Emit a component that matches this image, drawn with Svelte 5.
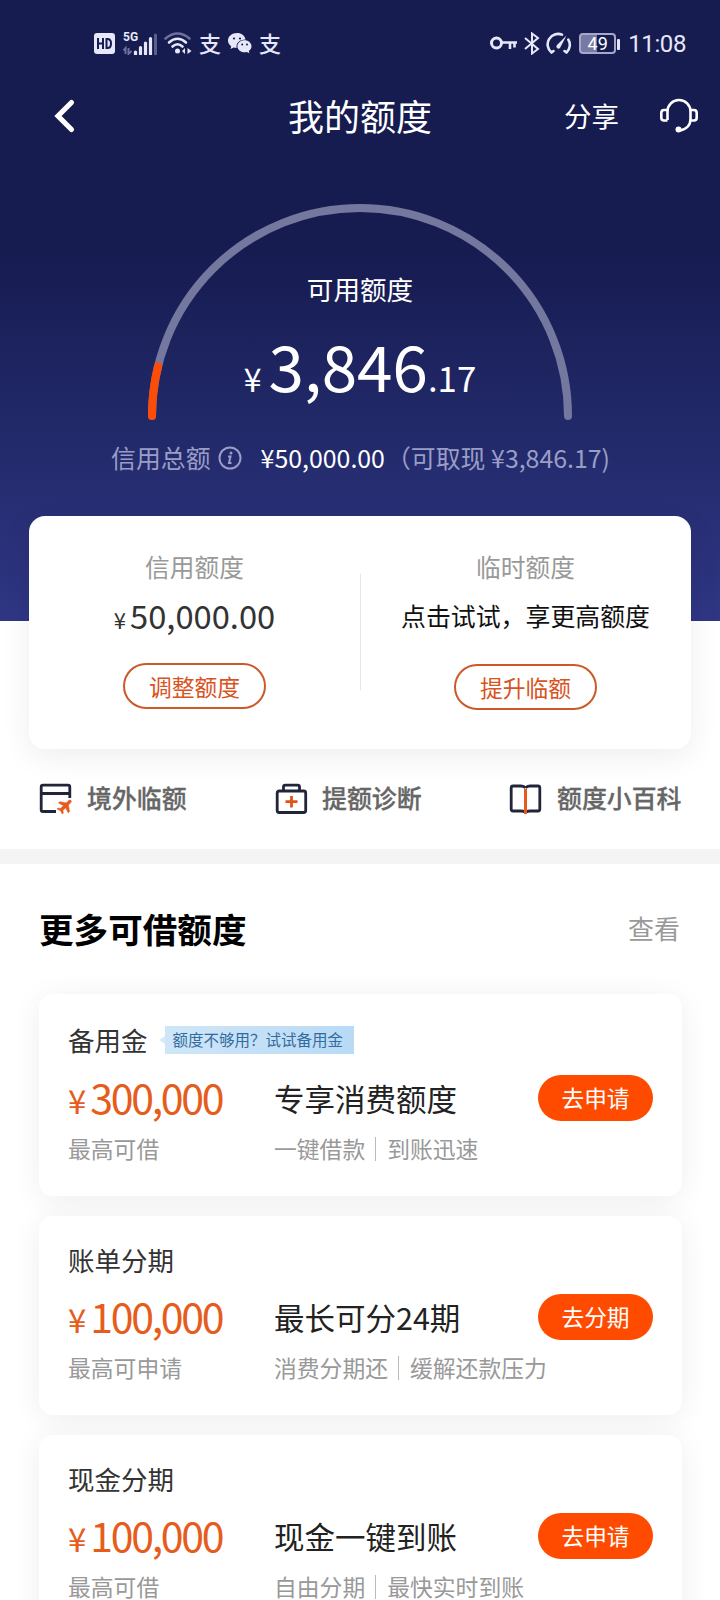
<script>
  const R = 208;
  const ratio = 3846.17 / 50000;
  const angle = Math.PI * ratio;
  const endX = 212 - R * Math.cos(angle);
  const endY = 212 - R * Math.sin(angle);

  const loans = [
    { title: '备用金', tag: '额度不够用？试试备用金', amount: '300,000', note: '最高可借', main: '专享消费额度', sub: ['一键借款', '到账迅速'], action: '去申请' },
    { title: '账单分期', amount: '100,000', note: '最高可申请', main: '最长可分24期', sub: ['消费分期还', '缓解还款压力'], action: '去分期' },
    { title: '现金分期', amount: '100,000', note: '最高可借', main: '现金一键到账', sub: ['自由分期', '最快实时到账'], action: '去申请' }
  ];
</script>

<main class="page">
  <header class="hero">
    <div class="status">
      <svg class="hd" width="21" height="21" viewBox="0 0 21 21">
        <rect width="21" height="21" rx="3" fill="#e6e8fa" />
        <path d="M4 5v11M9 5v11M4 10.500h5M12.500 6v9h1q3.500 0 3.500-4.500t-3.500-4.500z" fill="none" stroke="#161b50" stroke-width="2" />
      </svg>
      <div class="net">
        <span>5G</span>
        <svg width="36" height="23" viewBox="0 0 36 23">
          <path d="M3.500 22v-6l-2 2.500M6.500 16v6l3-3" fill="none" stroke="#6b70a0" stroke-width="2" />
          <path d="M13.500 22v-2M18.500 22v-6.500M23.500 22v-11M28.500 22v-15.500" stroke="#e6e8fa" stroke-width="3.200" stroke-linecap="round" />
          <path d="M33.500 22v-19" stroke="#5a5f8f" stroke-width="3" stroke-linecap="round" />
        </svg>
      </div>
      <svg class="wifi" width="28" height="23" viewBox="0 0 28 23">
        <g fill="none" stroke-width="2.600" stroke-linecap="round">
          <path d="M1.500 6.500Q13.500-3.500 25.500 6.500" stroke="#6b70a0" />
          <path d="M5 10.500Q13.500 3 22 10.500M8.500 14.500Q13.500 10 18.500 14.500" stroke="#e6e8fa" />
        </g>
        <circle cx="13.500" cy="19" r="2.500" fill="#e6e8fa" />
        <path d="M21 16v6l-3-3zM23.500 16l4 3-4 3z" fill="#e6e8fa" />
      </svg>
      <span class="zhi">支</span>
      <svg class="wechat" width="24" height="21" viewBox="0 0 24 21">
        <path d="M9 0C4 0 0 3.300 0 7.500c0 2.300 1.200 4.300 3.200 5.700L2.500 16l3.200-1.600c1 .3 2 .5 3 .5-1-5 3-8.500 8.800-8.500C16.800 2.700 13.500 0 9 0z" fill="#e6e8fa" />
        <path d="M16.500 7.300c-4 0-7.100 2.700-7.100 6s3.100 6 7.100 6c.8 0 1.600-.1 2.400-.4l2.500 1.400-.6-2.300c1.600-1.100 2.700-2.800 2.700-4.700 0-3.300-3-6-7-6z" fill="#e6e8fa" />
        <circle cx="6" cy="5.500" r="1.100" fill="#161b50" /><circle cx="12" cy="5.500" r="1.100" fill="#161b50" />
        <circle cx="14.200" cy="11.600" r="1" fill="#161b50" /><circle cx="19" cy="11.600" r="1" fill="#161b50" />
      </svg>
      <span class="zhi second">支</span>
      <div class="right">
        <svg class="key" width="27" height="14" viewBox="0 0 27 14" fill="none" stroke="#e6e8fa" stroke-width="3">
          <circle cx="6.500" cy="7" r="5" /><path d="M12 6.500h15M20 7v6M24.500 7v4.500" stroke-width="2.600" />
        </svg>
        <svg class="bt" width="16" height="23" viewBox="0 0 16 23" fill="none" stroke="#e6e8fa" stroke-width="2">
          <path d="M1 6l13 11-6 4.500V1.500L14 6 1 17" />
        </svg>
        <svg class="speed" width="26" height="23" viewBox="0 0 26 23" fill="none" stroke="#e6e8fa" stroke-width="2.600" stroke-linecap="round">
          <path d="M5.500 20.500A10.500 10.500 0 0 1 16 2.600M22.300 7.500A10.500 10.500 0 0 1 20.500 20.500M5.500 20.500l2-1.500M20.500 20.500l-2-1.500" />
          <path d="M20.500 3.500L11 13a2 2 0 1 0 3 3z" fill="#e6e8fa" stroke="none" />
        </svg>
        <div class="battery">49</div>
        <span class="nub"></span>
        <span class="time">11:08</span>
      </div>
    </div>

    <nav class="bar">
      <svg class="back" width="24" height="36" viewBox="0 0 24 36" fill="none" stroke="#fff" stroke-width="5.200" stroke-linecap="round" stroke-linejoin="miter">
        <path d="M19.500 4.500L6 18l13.500 13.500" />
      </svg>
      <h1>我的额度</h1>
      <span class="share">分享</span>
      <svg class="headset" width="38" height="35" viewBox="0 0 38 35" fill="none" stroke="#fff" stroke-width="2.600">
        <path d="M7.500 22V13.500a11.500 11.500 0 0 1 23 0v7.500c0 6-4 10.500-11 11.500" />
        <path d="M7.500 12H4q-2.700 0-2.700 3v4.500q0 3 2.700 3h3.500M30.500 12H34q2.700 0 2.700 3v4.500q0 3-2.700 3h-3.500" />
        <circle cx="18.500" cy="31.500" r="3" fill="#fff" stroke="none" />
      </svg>
    </nav>

    <section class="gauge">
      <svg width="424" height="216" viewBox="0 0 424 216" fill="none" stroke-width="8" stroke-linecap="round">
        <path d="M4 212A208 208 0 0 1 420 212" stroke="#74789f" />
        <path d={`M4 212A208 208 0 0 1 ${endX} ${endY}`} stroke="#fc4c08" />
      </svg>
      <div class="reading">
        <p>可用额度</p>
        <div class="big"><span class="yen">¥</span><b>3,846</b><span class="cents">.17</span></div>
      </div>
    </section>

    <div class="total">
      <span>信用总额</span>
      <svg width="24" height="24" viewBox="0 0 24 24" fill="none" stroke="#9a9ec6">
        <circle cx="12" cy="12" r="10.500" stroke-width="2" />
        <path d="M10 10.500h2.500l-1.500 6.500h2.500" stroke-width="2" /><circle cx="13" cy="7" r="1.500" fill="#9a9ec6" stroke="none" />
      </svg>
      <strong>¥50,000.00</strong>
      <span class="cash">（可取现 ¥3,846.17)</span>
    </div>
  </header>

  <section class="limits">
    <div class="col">
      <p class="label">信用额度</p>
      <p class="sum"><small>¥</small>50,000.00</p>
      <button>调整额度</button>
    </div>
    <div class="col second">
      <p class="label">临时额度</p>
      <p class="try">点击试试，享更高额度</p>
      <button>提升临额</button>
    </div>
  </section>

  <section class="links">
    <div class="link">
      <svg width="34" height="32" viewBox="0 0 34 32" fill="none" stroke="#20253a" stroke-width="2.800">
        <path d="M17 28.500H4q-1.800 0-1.800-1.800V4q0-1.800 1.800-1.800h25q1.800 0 1.800 1.800v11M2 10.500h29" />
        <path d="M32 17.500c-1-.8-2-.3-3 .7l-1.800 1.700-6.400-1.200-1.300 1.300 5 2.600-2.800 2.800-2.500-.4-1 1 3.400 1.700 1.700 3.400 1-1-.4-2.500 2.800-2.800 2.500 5 1.300-1.300-1.100-6.400 1.700-1.800c1-1 1.600-2 .9-2.800z" fill="#e65a1c" stroke="#e65a1c" stroke-width=".6" />
      </svg>
      <span>境外临额</span>
    </div>
    <div class="link two">
      <svg width="34" height="32" viewBox="0 0 34 32" fill="none" stroke="#20253a" stroke-width="2.800">
        <rect x="2.200" y="8" width="28.500" height="21.500" rx="2" /><path d="M8.500 8V4q0-1.800 1.800-1.800h12.400q1.800 0 1.800 1.800v4" />
        <path d="M16.500 13v11.500M10.500 18.700h12" stroke="#e0531c" />
      </svg>
      <span>提额诊断</span>
    </div>
    <div class="link three">
      <svg width="34" height="32" viewBox="0 0 34 32" fill="none" stroke="#20253a" stroke-width="2.800">
        <path d="M16.500 5Q15 3 12 3H4Q2.200 3 2.200 5v21q0 2 1.800 2h8q3.500 0 4.500 1.500M16.500 5Q18 3 21 3h8q1.800 0 1.800 2v21q0 2-1.800 2h-8q-3.500 0-4.500 1.500" />
        <path d="M16.500 6v25" stroke="#e65a1c" stroke-width="3" />
      </svg>
      <span>额度小百科</span>
    </div>
  </section>

  <section class="more">
    <div class="head"><h2>更多可借额度</h2><a>查看</a></div>
    {#each loans as loan}
      <article class:tagged={loan.tag}>
        <div class="title">
          <span>{loan.title}</span>
          {#if loan.tag}<em>{loan.tag}</em>{/if}
        </div>
        <div class="row">
          <div class="left">
            <p class="price"><span>¥</span>{loan.amount}</p>
            <p class="note">{loan.note}</p>
          </div>
          <div class="mid">
            <p class="main">{loan.main}</p>
            <p class="sub"><span>{loan.sub[0]}</span><i></i><span>{loan.sub[1]}</span></p>
          </div>
          <button>{loan.action}</button>
        </div>
      </article>
    {/each}
  </section>
</main>

<style>
  :global(body) { margin: 0; background: #fff; }
  .page { width: 720px; height: 1600px; overflow: hidden; background: #fff; font-family: "Noto Sans CJK SC", sans-serif; color: #222; }
  p, h1, h2 { margin: 0; font-weight: 400; white-space: nowrap; }
  svg { display: block; flex: none; }
  button { font-family: inherit; padding: 0; box-sizing: border-box; white-space: nowrap; }
  .hero { height: 621px; background: linear-gradient(#161b50 0, #161b50 250px, #202765 400px, #2f3684 621px); color: #fff; }

  .status { height: 88px; display: flex; align-items: center; padding: 0 34px 0 94px; box-sizing: border-box; color: #e6e8fa; }
  .hd { margin-top: -1px; }
  .net { position: relative; margin: -2px 0 0 7px; }
  .net span { position: absolute; left: 1px; top: -1px; font: 700 12px/12px Roboto, sans-serif; }
  .wifi { margin: -1px 0 0 6px; }
  .zhi { font-size: 22px; line-height: 22px; font-weight: 500; margin: -4px 0 0 7px; }
  .wechat { margin: -1px 0 0 7px; }
  .zhi.second { margin-left: 7px; }
  .right { margin-left: auto; display: flex; align-items: center; }
  .key { margin-top: -2px; }
  .bt { margin: -2px 0 0 7px; }
  .speed { margin: -2px 0 0 6px; }
  .battery { width: 37px; height: 21px; box-sizing: border-box; border: 2px solid #a5a8c9; border-radius: 4px; margin: -1px 0 0 7px; background: linear-gradient(90deg, #777aa2 48%, transparent 48%); font: 400 18px/17px Roboto, sans-serif; text-align: center; color: #fff; }
  .nub { width: 3px; height: 11px; background: #e6e8fa; border-radius: 1px; margin-left: 1px; }
  .time { font: 400 24px/28px Roboto, sans-serif; margin-left: 8px; letter-spacing: -.4px; }

  .bar { height: 60px; display: grid; grid-template-columns: 288px 144px 132px 96px 1fr; align-items: center; }
  .back { margin-left: 52px; margin-top: -5px; }
  .bar h1 { font-size: 36px; line-height: 56px; margin-top: -6px; }
  .share { font-size: 27.500px; line-height: 40px; grid-column: 4; margin-top: -6px; }
  .headset { margin-top: -5px; }

  .gauge { width: 424px; height: 216px; margin: 56px auto 0; display: grid; }
  .gauge > * { grid-area: 1 / 1; }
  .reading { padding-top: 67px; text-align: center; }
  .reading p { font-size: 26.600px; line-height: 36px; }
  .big { display: flex; align-items: baseline; justify-content: center; line-height: 80px; margin-top: 17px; }
  .big b { font-weight: 400; font-size: 63.800px; }
  .yen { font-size: 32px; margin-right: 7px; }
  .cents { font-size: 34.800px; }

  .total { display: flex; align-items: center; height: 40px; margin: 18px 0 0 111px; font-size: 24.900px; line-height: 40px; color: #9a9ec6; white-space: nowrap; }
  .total span, .total strong { margin-top: -2px; }
  .total svg { margin-left: 7px; }
  .total strong { font-weight: 400; color: #fff; margin-left: 19px; }
  .total .cash { margin-left: 1px; }

  .limits { position: relative; width: 662px; height: 233px; box-sizing: border-box; margin: -105px auto 0; background: #fff; border-radius: 16px; box-shadow: 0 8px 30px rgba(0, 0, 0, .07); display: grid; grid-template-columns: 1fr 1fr; }
  .col { text-align: center; padding-top: 32px; }
  .col.second { background: linear-gradient(#e6e6e6, #e6e6e6) 0 58px / 1px 116px no-repeat; }
  .label { font-size: 24.700px; line-height: 36px; color: #999; }
  .sum { font-size: 32.700px; line-height: 48px; height: 48px; margin-top: 7px; margin-bottom: 24px; color: #333; }
  .sum small { font-size: 22px; line-height: 1; margin-right: 4px; }
  .try { font-size: 24.900px; line-height: 48px; margin-top: 7px; margin-bottom: 25px; color: #111; }
  .limits button { display: block; margin: 0 auto; width: 143px; height: 46px; border: 2px solid #cc5a28; border-radius: 23px; background: #fff; color: #d9531e; font-size: 22.800px; line-height: 41px; }

  .links { height: 100px; display: grid; grid-template-columns: 235px 235px 1fr; padding-left: 39px; align-items: center; }
  .link { display: flex; align-items: center; font-size: 24.900px; line-height: 36px; font-weight: 500; color: #666; white-space: nowrap; -webkit-text-stroke: .3px #666; }
  .link svg { margin-right: 14px; }
  .link.two svg { margin: 0 13px 0 1px; }
  .link span { margin-top: -5px; }
  .more { border-top: 15px solid #f4f4f4; padding: 0 38px 0 39px; }
  .head { display: flex; justify-content: space-between; align-items: center; height: 130px; }
  .head h2 { font-size: 34.600px; font-weight: 700; color: #000; line-height: 50px; margin-top: -2px; }
  .head a { font-size: 26px; color: #999; line-height: 40px; margin: -2px 2px 0 0; }

  article { height: 199px; box-sizing: border-box; padding: 26px 29px 0 29px; border-radius: 14px; background: #fff; margin-bottom: 20px; box-shadow: 0 4px 30px rgba(0, 0, 0, .07); }
  article.tagged { height: 202px; padding-top: 27px; }
  .title { display: flex; align-items: center; height: 36px; font-size: 26.500px; line-height: 36px; color: #333; }
  .tagged .title { height: 38px; }
  .title em { position: relative; margin: 0 0 0 17px; width: 189px; height: 28px; box-sizing: border-box; padding-left: 8px; background: linear-gradient(90deg, #cfe6f8, #b8daf5); color: #336b9e; font-style: normal; font-size: 15.500px; line-height: 27px; white-space: nowrap; }
  .title em::before { content: ""; position: absolute; left: -6px; top: 10px; border: 4px solid transparent; border-left: 0; border-right: 6px solid #d6eafa; }
  .row { display: grid; grid-template-columns: 206px minmax(0, 1fr) 115px; }
  .price { font-size: 41px; line-height: 60px; height: 66px; letter-spacing: -2.300px; color: #e65c1c; margin-top: 7px; }
  .price span { font-size: 33px; letter-spacing: 0; margin-right: 4px; }
  .note, .sub { font-size: 22.800px; line-height: 34px; color: #999; }
  .mid .main { font-size: 30.500px; line-height: 60px; height: 64px; margin-top: 9px; color: #222; }
  .sub { display: flex; align-items: center; width: max-content; }
  .sub i { flex: none; width: 1px; height: 24px; background: #bbb; margin: 0 11px 0 10px; }
  article button { width: 115px; height: 46px; border: 0; border-radius: 23px; background: #ff4b00; color: #fff; font-size: 22.700px; line-height: 44px; margin-top: 16px; }
</style>
